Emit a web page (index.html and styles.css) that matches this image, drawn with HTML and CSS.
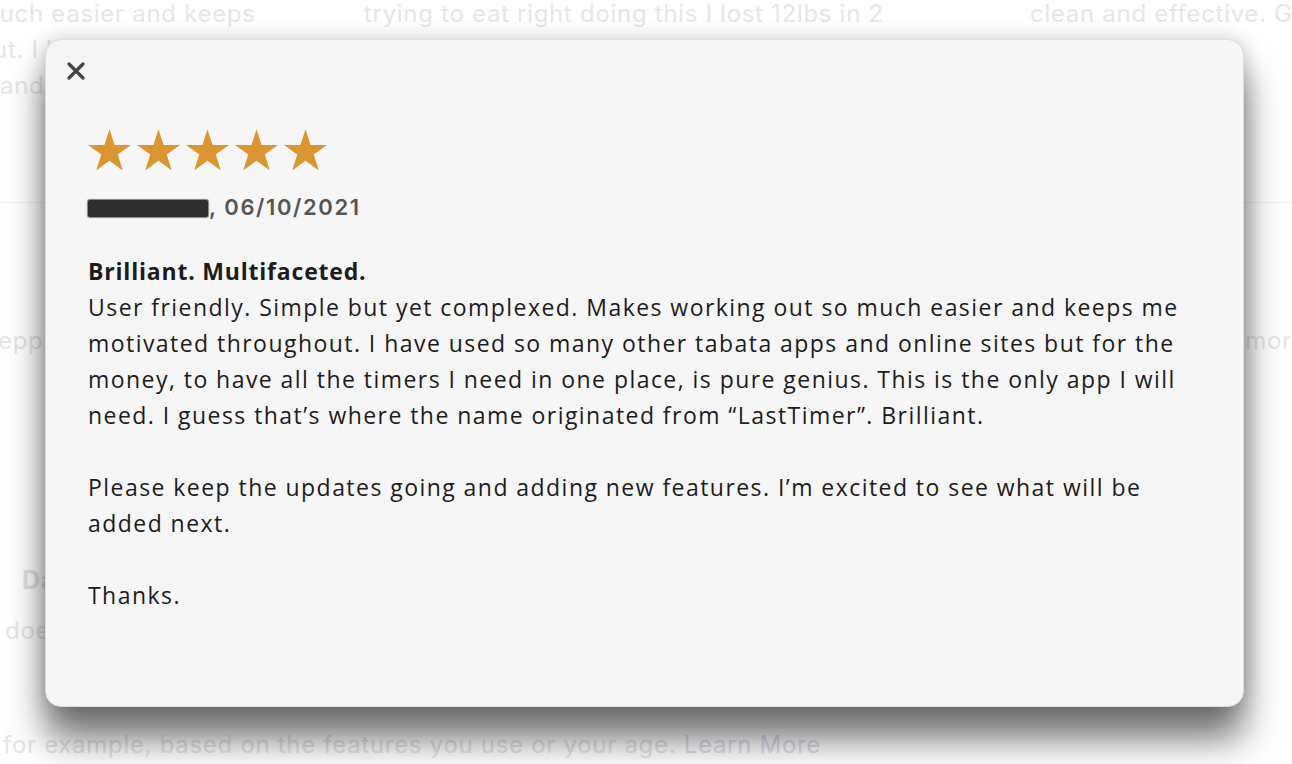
FILE: index.html
```html
<!DOCTYPE html>
<html>
<head>
<meta charset="utf-8">
<link rel="stylesheet" href="styles.css">
</head>
<body>
<div class="page">
  <div class="bg-row">
    <div class="bg-col c1">
      <p>much easier and keeps</p>
      <p>out. I have</p>
      <p class="indent">and</p>
    </div>
    <div class="bg-col c2">
      <p>trying to eat right doing this I lost 12lbs in 2</p>
    </div>
    <div class="bg-col c3">
      <p>clean and effective. G</p>
    </div>
  </div>
  <div class="bg-divider"></div>
  <div class="bg-mid">
    <span class="bg-left">eppl</span>
    <span class="bg-right">more</span>
  </div>
  <div class="bg-section">
    <h3 class="bg-head">Data</h3>
    <p class="bg-sub">does</p>
  </div>
  <p class="bg-foot">for example, based on the features you use or your age. <span class="bg-link">Learn More</span></p>
</div>

<div class="modal">
  <button class="close" aria-label="Close">
    <svg width="20" height="20" viewBox="0 0 20 20"><path d="M3 3 L17 17 M17 3 L3 17" stroke="#454545" stroke-width="3.2" stroke-linecap="round"/></svg>
  </button>
  <div class="stars">
    <svg viewBox="0 0 24 24" class="star"><path d="M12 1.2 L14.6 9.2 L23 9.2 L16.2 14.1 L18.8 22.2 L12 17.2 L5.2 22.2 L7.8 14.1 L1 9.2 L9.4 9.2 Z"/></svg>
    <svg viewBox="0 0 24 24" class="star"><path d="M12 1.2 L14.6 9.2 L23 9.2 L16.2 14.1 L18.8 22.2 L12 17.2 L5.2 22.2 L7.8 14.1 L1 9.2 L9.4 9.2 Z"/></svg>
    <svg viewBox="0 0 24 24" class="star"><path d="M12 1.2 L14.6 9.2 L23 9.2 L16.2 14.1 L18.8 22.2 L12 17.2 L5.2 22.2 L7.8 14.1 L1 9.2 L9.4 9.2 Z"/></svg>
    <svg viewBox="0 0 24 24" class="star"><path d="M12 1.2 L14.6 9.2 L23 9.2 L16.2 14.1 L18.8 22.2 L12 17.2 L5.2 22.2 L7.8 14.1 L1 9.2 L9.4 9.2 Z"/></svg>
    <svg viewBox="0 0 24 24" class="star"><path d="M12 1.2 L14.6 9.2 L23 9.2 L16.2 14.1 L18.8 22.2 L12 17.2 L5.2 22.2 L7.8 14.1 L1 9.2 L9.4 9.2 Z"/></svg>
  </div>
  <div class="meta"><span class="redacted"></span>, 06/10/2021</div>
  <div class="review">
    <p class="title">Brilliant. Multifaceted.</p>
    <p>User friendly. Simple but yet complexed. Makes working out so much easier and keeps me motivated throughout. I have used so many other tabata apps and online sites but for the money, to have all the timers I need in one place, is pure genius. This is the only app I will need. I guess that’s where the name originated from “LastTimer”. Brilliant.</p>
    <p class="gap">Please keep the updates going and adding new features. I’m excited to see what will be added next.</p>
    <p class="gap">Thanks.</p>
  </div>
</div>
</body>
</html>
```

FILE: styles.css
```css
html, body {
  margin: 0;
  padding: 0;
  background: #ffffff;
  width: 1292px;
  height: 764px;
  overflow: hidden;
}
body {
  font-family: Inter, "Liberation Sans", sans-serif;
  position: relative;
}
.page {
  color: #e6e6e6;
  font-size: 24px;
  letter-spacing: 0.7px;
}
.page p { margin: 0; }
.bg-row {
  display: grid;
  grid-template-columns: 386px 666px 300px;
  margin-left: -22px;
  column-gap: 0;
  margin-top: -4px;
  line-height: 36px;
  height: 206px;
}
.bg-col p { white-space: nowrap; }
.bg-col .indent { padding-left: 22px; }
.bg-divider {
  height: 1px;
  background: #f0f0f0;
}
.bg-mid {
  display: flex;
  justify-content: space-between;
  margin-top: 124px;
  line-height: 28px;
}
.bg-left { margin-left: -2px; }
.bg-right { margin-right: -14px; }
.bg-section {
  margin-top: 210px;
  padding-left: 22px;
}
.bg-head {
  margin: 0;
  font-size: 25px;
  font-weight: 700;
  color: #e2e2e2;
  line-height: 30px;
}
.bg-sub {
  margin-left: -17px !important;
  margin-top: 23px !important;
  line-height: 26px;
}
.bg-foot {
  margin-top: 88px !important;
  margin-left: 3px !important;
  line-height: 26px;
  white-space: nowrap;
}
.bg-link { color: #dde0ee; }

.modal {
  position: absolute;
  left: 45px;
  top: 39px;
  width: 1199px;
  height: 668px;
  box-sizing: border-box;
  background: #f6f6f6;
  border: 1px solid #dedede;
  border-radius: 16px;
  box-shadow: 0 32px 36px rgba(0, 0, 0, 0.55), 0 0 20px rgba(0, 0, 0, 0.2);
  padding: 21px 42px 0 42px;
  font-family: "Open Sans", "Noto Sans", sans-serif;
  color: #1c1c1c;
}
.close {
  display: block;
  margin-left: -22px;
  width: 20px;
  height: 20px;
  padding: 0;
  border: 0;
  background: none;
}
.close svg { display: block; }
.stars {
  display: flex;
  gap: 2px;
  margin-top: 46px;
  margin-left: -2px;
}
.star {
  width: 47px;
  height: 47px;
  fill: #dc962f;
}
.meta {
  margin-top: 20px;
  font-family: Inter, "Noto Sans", sans-serif;
  font-size: 22px;
  font-weight: 600;
  letter-spacing: 1.6px;
  color: #555;
  line-height: 26px;
  display: flex;
  align-items: center;
}
.redacted {
  display: inline-block;
  width: 120px;
  height: 17px;
  background: #2f2f2f;
  box-shadow: 0 0 1px 1px rgba(50, 50, 50, 0.6);
  border-radius: 2px;
  margin-top: 2px;
  margin-right: 1px;
}
.review {
  margin-top: 33px;
  font-size: 23px;
  line-height: 36px;
  letter-spacing: 1.45px;
}
.review p { margin: 0; }
.review .title { font-weight: 700; letter-spacing: 0.8px; }
.review .gap { margin-top: 36px; }
```
